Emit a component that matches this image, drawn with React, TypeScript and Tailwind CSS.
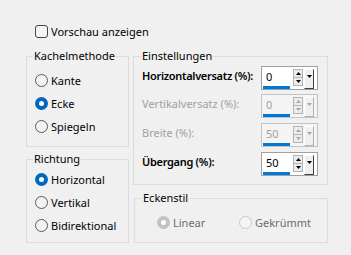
type RadioProps = { label: string; checked?: boolean; disabled?: boolean };

function Radio({ label, checked, disabled }: RadioProps) {
  let circle = '';
  if (checked && !disabled) circle = 'bg-[#0067c0]';
  else if (checked && disabled) circle = 'bg-[#c2c2c2]';
  else if (!checked && disabled) circle = 'border border-[#c8c8c8] bg-[#f5f5f5]';
  else circle = 'border border-[#5a5a5a] bg-[#f3f3f3]';
  return (
    <div className="flex h-[13px] items-center gap-[3px]">
      <div className={`flex h-[13px] w-[13px] shrink-0 items-center justify-center rounded-full ${circle}`}>
        {checked && <div className="h-[5px] w-[5px] rounded-full bg-white" />}
      </div>
      <span className={`leading-[16px] ${disabled ? 'text-[#6d6d6d]' : 'text-black'}`}>{label}</span>
    </div>
  );
}

function Arrow({ up, color }: { up?: boolean; color: string }) {
  return (
    <svg width="5" height="3" viewBox="0 0 5 3" className="block">
      {up ? <path d="M0 3 L2.5 0 L5 3 Z" fill={color} /> : <path d="M0 0 L5 0 L2.5 3 Z" fill={color} />}
    </svg>
  );
}

function Spin({ value, disabled }: { value: string; disabled?: boolean }) {
  const arrow = disabled ? '#a8a8a8' : '#000000';
  return (
    <div
      className={`flex h-[24px] w-[57px] shrink-0 border ${
        disabled ? 'border-[#c4c4c4] bg-[#f4f4f4]' : 'border-[#a0a0a0] bg-white'
      }`}
    >
      <div className="flex w-[31px] flex-col pl-[1px]">
        <div className={`h-[19px] pl-[3px] pt-[2px] leading-[16px] ${disabled ? 'text-[#a0a0a0]' : 'text-black'}`}>
          {value}
        </div>
        <div className="h-[3px] w-[27px] bg-[#0078d4]" />
      </div>
      <div className="mt-[2px] flex h-[17px] w-[10px] flex-col border border-[#b4b4b4] bg-[#ececec]">
        <div className="flex h-[8px] items-center justify-center border-b border-[#b4b4b4]">
          <Arrow up color={arrow} />
        </div>
        <div className="flex h-[7px] items-center justify-center">
          <Arrow color={arrow} />
        </div>
      </div>
      <div
        className={`ml-[1px] mt-[2px] flex h-[20px] w-[10px] justify-center border-l border-t border-l-white border-t-white border-r border-b bg-[#f0f0f0] pt-[5px] ${
          disabled ? 'border-r-[#b0b0b0] border-b-[#b0b0b0]' : 'border-r-[#404040] border-b-[#404040]'
        }`}
      >
        <Arrow color={arrow} />
      </div>
    </div>
  );
}

function Row({ label, value, disabled }: { label: string; value: string; disabled?: boolean }) {
  return (
    <div className="flex h-[24px] items-start justify-between">
      <span
        className={`pt-[2px] leading-[16px] ${
          disabled ? 'text-[#a0a0a0]' : 'font-semibold tracking-[-0.3px] text-black'
        }`}
      >
        {label}
      </span>
      <Spin value={value} disabled={disabled} />
    </div>
  );
}

export default function App() {
  return (
    <div
      className="h-[255px] w-[351px] overflow-hidden bg-[#f0f0f0] text-[11px] text-black"
      style={{ fontFamily: '"Noto Sans", "Open Sans", sans-serif' }}
    >
      <div className="flex h-[13px] items-center gap-[3px] pl-[35px] mt-[25px]">
        <div className="h-[13px] w-[13px] rounded-[3px] border border-[#444] bg-[#f5f5f5]" />
        <span className="leading-[16px]">Vorschau anzeigen</span>
      </div>

      <div className="mt-[10px] flex gap-[4px] pl-[26px]">
        <div className="flex w-[103px] flex-col gap-[4px]">
          <fieldset className="h-[99px] border border-[#dcdcdc]">
            <legend className="ml-[6px] px-[1px] leading-[16px]">Kachelmethode</legend>
            <div className="flex flex-col pl-[8px] pt-[5px]">
              <div className="flex h-[23px] items-center"><Radio label="Kante" /></div>
              <div className="flex h-[23px] items-center"><Radio label="Ecke" checked /></div>
              <div className="flex h-[23px] items-center"><Radio label="Spiegeln" /></div>
            </div>
          </fieldset>
          <fieldset className="h-[92px] border border-[#dcdcdc]">
            <legend className="ml-[6px] px-[1px] leading-[16px]">Richtung</legend>
            <div className="flex flex-col pl-[8px] pt-[1px]">
              <div className="flex h-[23px] items-center"><Radio label="Horizontal" checked /></div>
              <div className="flex h-[23px] items-center"><Radio label="Vertikal" /></div>
              <div className="flex h-[23px] items-center"><Radio label="Bidirektional" /></div>
            </div>
          </fieldset>
        </div>

        <div className="flex w-[195px] flex-col">
          <fieldset className="h-[137px] border border-[#dcdcdc]">
            <legend className="ml-[7px] px-[1px] leading-[16px]">Einstellungen</legend>
            <div className="flex flex-col pl-[8px] pr-[9px] pt-[2px]">
              <Row label="Horizontalversatz (%):" value="0" />
              <div className="mt-[4px]"><Row label="Vertikalversatz (%):" value="0" disabled /></div>
              <div className="mt-[5px]"><Row label="Breite (%):" value="50" disabled /></div>
              <div className="mt-[5px]"><Row label="Übergang (%):" value="50" /></div>
            </div>
          </fieldset>
          <fieldset className="ml-[1px] mt-[5px] h-[53px] w-[194px] border border-[#dcdcdc]">
            <legend className="ml-[7px] px-[1px] leading-[16px]">Eckenstil</legend>
            <div className="flex pl-[22px] pt-[10px]">
              <div className="w-[82px]"><Radio label="Linear" checked disabled /></div>
              <Radio label="Gekrümmt" disabled />
            </div>
          </fieldset>
        </div>
      </div>
    </div>
  );
}
